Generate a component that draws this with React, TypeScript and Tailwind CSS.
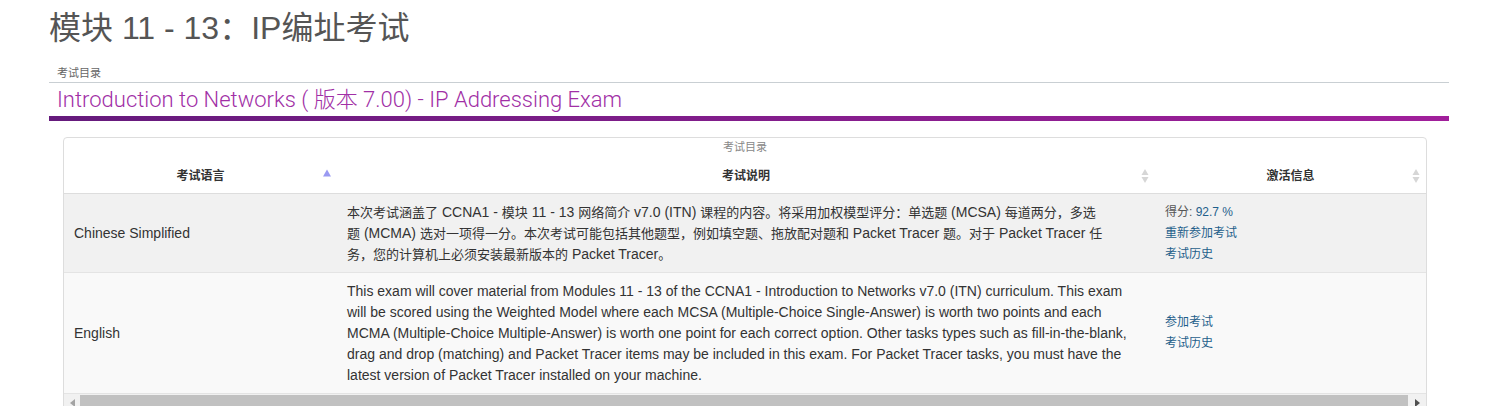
import React from "react";

const SortBoth = () => (
  <svg width="8" height="16" viewBox="0 0 8 16" className="absolute right-[6px] top-[12px]">
    <path d="M4 1 L7.5 7 L0.5 7 Z" fill="#d6d6d6" />
    <path d="M4 15 L7.5 9 L0.5 9 Z" fill="#d6d6d6" />
  </svg>
);

const SortUp = () => (
  <svg width="8" height="8" viewBox="0 0 8 8" className="absolute right-[6px] top-[13px]">
    <path d="M4 0.5 L8 7.5 L0 7.5 Z" fill="#9a9af2" />
  </svg>
);

const CJK_RE = /([\u3000-\u9fff\uff00-\uffef]+)/;
const mixed = (s: string) =>
  s.split(CJK_RE).map((p, i) =>
    CJK_RE.test(p) ? (
      <span key={i} className="text-[13px]">
        {p}
      </span>
    ) : (
      <React.Fragment key={i}>{p}</React.Fragment>
    )
  );

export default function App() {
  const font = "font-['Liberation_Sans','Noto_Sans_CJK_SC',sans-serif]";
  return (
    <div className={`${font} bg-white w-[1485px] h-[406px] overflow-hidden`}>
      <div className="pl-[49px] w-[1449px]">
        <h1 className="text-[32px] leading-[38px] text-[#555] pt-[9px] pb-[19px]">
          模块 11 - 13：IP编址考试
        </h1>
        <div className="text-[11px] leading-[14px] text-[#666] pl-[8px] pb-[2px]">考试目录</div>
        <div className="h-px bg-[#c9cfd3]" />
        <div className="font-['Roboto','Noto_Sans_CJK_SC',sans-serif] font-light text-[22px] leading-[28px] text-[#a12fa6] pl-[8px] pt-[3px] pb-[2px]">
          Introduction to Networks ( 版本 7.00) - IP Addressing Exam
        </div>
        <div className="h-[5px] bg-gradient-to-r from-[#651a7c] to-[#a11f9b]" />
        <div className="ml-[14px] mt-[16px] w-[1364px] border border-[#dddddd] rounded-t-[4px]">
          <div className="text-center text-[11px] leading-[18px] text-[#888]">考试目录</div>
          <div className="flex h-[38px] border-b border-[#dddddd] text-[12px] font-bold text-[#333]">
            <div className="relative w-[273px] flex items-center justify-center pt-[2px]">
              考试语言
              <SortUp />
            </div>
            <div className="relative w-[818px] flex items-center justify-center pt-[2px]">
              考试说明
              <SortBoth />
            </div>
            <div className="relative flex-1 flex items-center justify-center pt-[2px]">
              激活信息
              <SortBoth />
            </div>
          </div>
          <div className="flex bg-[#f1f1f1] border-b border-[#e4e4e4] text-[14px] leading-[21px] text-[#333]">
            <div className="w-[273px] px-[10px] flex items-center">Chinese Simplified</div>
            <div className="w-[818px] px-[10px] pt-[8px] pb-[7px] whitespace-nowrap">
              {mixed("本次考试涵盖了 CCNA1 - 模块 11 - 13 网络简介 v7.0 (ITN) 课程的内容。将采用加权模型评分：单选题 (MCSA) 每道两分，多选")}
              <br />
              {mixed("题 (MCMA) 选对一项得一分。本次考试可能包括其他题型，例如填空题、拖放配对题和 Packet Tracer 题。对于 Packet Tracer 任")}
              <br />
              {mixed("务，您的计算机上必须安装最新版本的 Packet Tracer。")}
            </div>
            <div className="flex-1 px-[10px] pt-[8px] pb-[7px] text-[12px] leading-[21px]">
              <div className="text-[#555]">
                得分: <span className="text-[#1f5f8b]">92.7 %</span>
              </div>
              <div className="text-[#1f5f8b]">重新参加考试</div>
              <div className="text-[#1f5f8b]">考试历史</div>
            </div>
          </div>
          <div className="flex bg-[#f9f9f9] border-b border-[#e4e4e4] text-[14px] leading-[21px] text-[#333]">
            <div className="w-[273px] px-[10px] flex items-center">English</div>
            <div className="w-[818px] px-[10px] pt-[8px] pb-[7px] whitespace-nowrap">
              This exam will cover material from Modules 11 - 13 of the CCNA1 - Introduction to Networks v7.0 (ITN) curriculum. This exam
              <br />
              will be scored using the Weighted Model where each MCSA (Multiple-Choice Single-Answer) is worth two points and each
              <br />
              MCMA (Multiple-Choice Multiple-Answer) is worth one point for each correct option. Other tasks types such as fill-in-the-blank,
              <br />
              drag and drop (matching) and Packet Tracer items may be included in this exam. For Packet Tracer tasks, you must have the
              <br />
              latest version of Packet Tracer installed on your machine.
            </div>
            <div className="flex-1 px-[10px] flex flex-col justify-center text-[12px] leading-[21px] text-[#1f5f8b]">
              <div>参加考试</div>
              <div>考试历史</div>
            </div>
          </div>
          <div className="flex items-center h-[17px] bg-[#f1f1f1]">
            <div className="w-[16px] flex justify-center">
              <svg width="5" height="8" viewBox="0 0 5 8">
                <path d="M5 0 L0 4 L5 8 Z" fill="#a3a3a3" />
              </svg>
            </div>
            <div className="flex-1 h-[15px] bg-[#c1c1c1]" />
            <div className="w-[18px] flex justify-center">
              <svg width="5" height="8" viewBox="0 0 5 8">
                <path d="M0 0 L5 4 L0 8 Z" fill="#505050" />
              </svg>
            </div>
          </div>
        </div>
      </div>
    </div>
  );
}
